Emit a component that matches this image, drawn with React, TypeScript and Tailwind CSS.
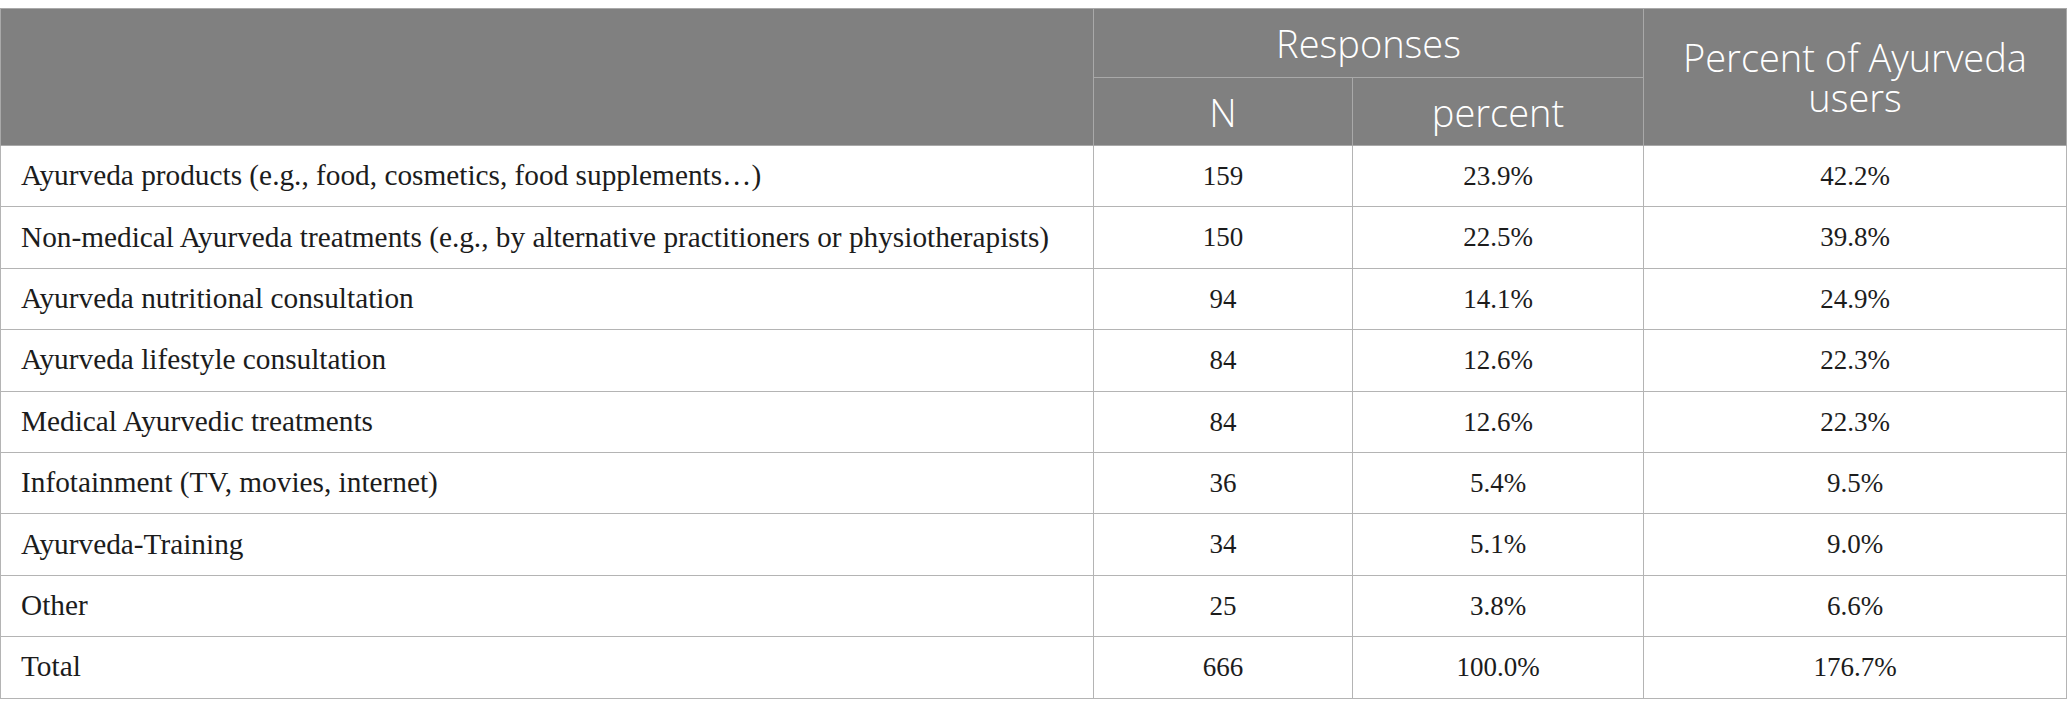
const rows = [
  { label: 'Ayurveda products (e.g., food, cosmetics, food supplements…)', n: '159', pct: '23.9%', users: '42.2%' },
  { label: 'Non-medical Ayurveda treatments (e.g., by alternative practitioners or physiotherapists)', n: '150', pct: '22.5%', users: '39.8%' },
  { label: 'Ayurveda nutritional consultation', n: '94', pct: '14.1%', users: '24.9%' },
  { label: 'Ayurveda lifestyle consultation', n: '84', pct: '12.6%', users: '22.3%' },
  { label: 'Medical Ayurvedic treatments', n: '84', pct: '12.6%', users: '22.3%' },
  { label: 'Infotainment (TV, movies, internet)', n: '36', pct: '5.4%', users: '9.5%' },
  { label: 'Ayurveda-Training', n: '34', pct: '5.1%', users: '9.0%' },
  { label: 'Other', n: '25', pct: '3.8%', users: '6.6%' },
  { label: 'Total', n: '666', pct: '100.0%', users: '176.7%' },
];

export default function App() {
  return (
    <div className="w-[2067px] h-[716px] bg-white pt-2">
      <table className="w-[2066px] table-fixed border-collapse">
        <colgroup>
          <col className="w-[1093px]" />
          <col className="w-[259px]" />
          <col className="w-[291px]" />
          <col className="w-[423px]" />
        </colgroup>

        {/* Header */}
        <thead className="bg-[#808080] text-white font-['Open_Sans',sans-serif] text-[38px] leading-[40px]">
          <tr className="h-[69px]">
            <th className="border border-[#a9a9a9]" rowSpan={2}></th>
            <th className="border border-[#a9a9a9] font-light" colSpan={2}>
              Responses
            </th>
            <th className="border border-[#a9a9a9] font-light px-4" rowSpan={2}>
              Percent of Ayurveda users
            </th>
          </tr>
          <tr className="h-[68px]">
            <th className="border border-[#a9a9a9] font-light">N</th>
            <th className="border border-[#a9a9a9] font-light">percent</th>
          </tr>
        </thead>

        {/* Body */}
        <tbody className="text-[#1c1c1c] font-['Liberation_Serif',serif] text-[29.3px]">
          {rows.map((r) => (
            <tr key={r.label} className="h-[61.4px]">
              <td className="border border-[#b4b4b4] pl-[20px]">{r.label}</td>
              <td className="border border-[#b4b4b4] text-center text-[27px]">{r.n}</td>
              <td className="border border-[#b4b4b4] text-center text-[27px]">{r.pct}</td>
              <td className="border border-[#b4b4b4] text-center text-[27px]">{r.users}</td>
            </tr>
          ))}
        </tbody>
      </table>
    </div>
  );
}
